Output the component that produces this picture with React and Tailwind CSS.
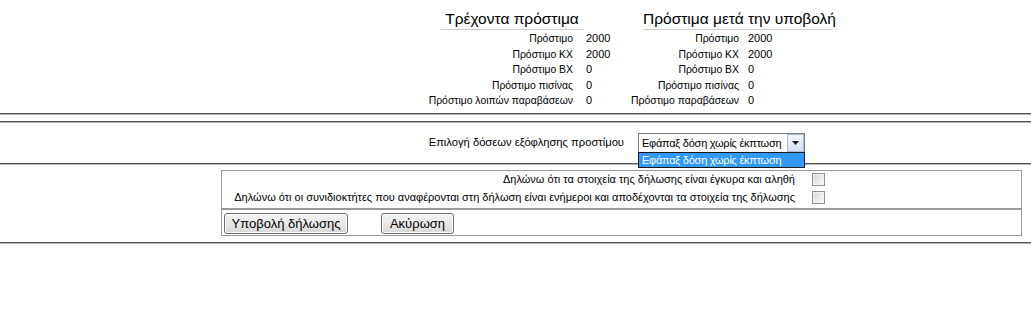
import React from 'react';

const current = [
  ['Πρόστιμο', '2000'],
  ['Πρόστιμο ΚΧ', '2000'],
  ['Πρόστιμο ΒΧ', '0'],
  ['Πρόστιμο πισίνας', '0'],
  ['Πρόστιμο λοιπών παραβάσεων', '0'],
];

const after = [
  ['Πρόστιμο', '2000'],
  ['Πρόστιμο ΚΧ', '2000'],
  ['Πρόστιμο ΒΧ', '0'],
  ['Πρόστιμο πισίνας', '0'],
  ['Πρόστιμο παραβάσεων', '0'],
];

// grooved rule like the old <hr>
const Rule = ({ className = '' }) => (
  <div className={`h-[2px] border-t border-t-[#555] border-b border-b-[#b5b5b5] ${className}`} />
);

const FineBlock = ({ title, rows, titleOffset, titleWidth, labelWidth, labelPad, width }) => (
  <div className={width}>
    <div className={`${titleOffset} ${titleWidth} border-b border-[#cfcfcf] text-center text-[15.5px] leading-[21px] whitespace-nowrap`}>
      {title}
    </div>
    <div className="pt-[1px]">
      {rows.map(([label, value]) => (
        <div key={label} className="flex text-[11px] leading-[15.5px]">
          <div className={`${labelWidth} ${labelPad} flex justify-end whitespace-nowrap text-[10.4px]`}>{label}</div>
          <div className="whitespace-nowrap">{value}</div>
        </div>
      ))}
    </div>
  </div>
);

const Checkbox = () => (
  <span className="block w-[13px] h-[13px] border border-[#8e8f8f] bg-gradient-to-br from-[#d8d8d8] to-[#fbfbfb] shadow-[inset_0_0_0_1px_#f4f4f4]" />
);

const Button = ({ children, className = '' }) => (
  <button
    type="button"
    className={`h-[21px] rounded-[3px] border border-[#707070] bg-gradient-to-b from-[#f4f4f4] via-[#e8e8e8] to-[#d6d6d6] text-[13px] leading-none text-black shadow-[inset_0_0_0_1px_#fcfcfc] ${className}`}
  >
    {children}
  </button>
);

export default function App() {
  return (
    <div className="w-[1031px] h-[328px] bg-white text-black font-['Liberation_Sans','Noto_Sans',sans-serif] overflow-hidden">
      <div className="flex pl-[429px] pt-[8px]">
        <FineBlock
          title="Τρέχοντα πρόστιμα"
          rows={current}
          width="w-[201px]"
          titleOffset="ml-[12px]"
          titleWidth="w-[142px]"
          labelWidth="w-[157px]"
          labelPad="pr-[13px]"
        />
        <FineBlock
          title="Πρόστιμα μετά την υποβολή"
          rows={after}
          width="w-[220px]"
          titleOffset="ml-[13px]"
          titleWidth="w-[190px]"
          labelWidth="w-[118px]"
          labelPad="pr-[9px]"
        />
      </div>

      <Rule className="mt-[4px]" />
      <Rule className="mt-[6px]" />

      <div className="flex items-center h-[40px]">
        <div className="w-[624px] flex justify-end whitespace-nowrap text-[11.2px]">
          Επιλογή δόσεων εξόφλησης προστίμου
        </div>
        <div className="relative ml-[14px]">
          <div className="flex h-[20px] w-[167px] border border-[#7f7f7f] bg-white">
            <div className="flex-1 pl-[3px] text-[11px] tracking-[-0.25px] leading-[18px] whitespace-nowrap">
              Εφάπαξ δόση χωρίς έκπτωση
            </div>
            <div className="w-[17px] h-[18px] flex items-center justify-center border border-[#a9bbd6] bg-gradient-to-b from-[#f3f6fb] to-[#d4dff0]">
              <svg width="7" height="4" viewBox="0 0 7 4">
                <path d="M0 0h7L3.5 4z" fill="#1a1a1a" />
              </svg>
            </div>
          </div>
          <div className="absolute left-0 top-[19px] w-[167px] h-[16px] border border-[#1a1a1a] bg-[#3399ff] text-white text-[11px] tracking-[-0.25px] leading-[14px] pl-[3px] whitespace-nowrap">
            Εφάπαξ δόση χωρίς έκπτωση
          </div>
        </div>
      </div>

      <Rule />

      <div className="ml-[221px] mt-[5px] w-[801px] border border-[#9a9a9a] text-[11px]">
        <div className="pb-[1px]">
          <div className="flex items-center h-[18px]">
            <div className="w-[576px] pr-[3px] flex justify-end whitespace-nowrap">
              Δηλώνω ότι τα στοιχεία της δήλωσης είναι έγκυρα και αληθή
            </div>
            <div className="ml-[14px]"><Checkbox /></div>
          </div>
          <div className="flex items-center h-[18px]">
            <div className="w-[576px] pr-[3px] flex justify-end whitespace-nowrap">
              Δηλώνω ότι οι συνιδιοκτήτες που αναφέρονται στη δήλωση είναι ενήμεροι και αποδέχονται τα στοιχεία της δήλωσης
            </div>
            <div className="ml-[14px]"><Checkbox /></div>
          </div>
        </div>
        <div className="h-[2px] bg-[#9a9a9a]" />
        <div className="flex items-start h-[25px] pt-[3px] pl-[2px] gap-[33px]">
          <Button className="w-[124px]">Υποβολή δήλωσης</Button>
          <Button className="w-[73px]">Ακύρωση</Button>
        </div>
      </div>

      <Rule className="mt-[6px]" />
    </div>
  );
}
